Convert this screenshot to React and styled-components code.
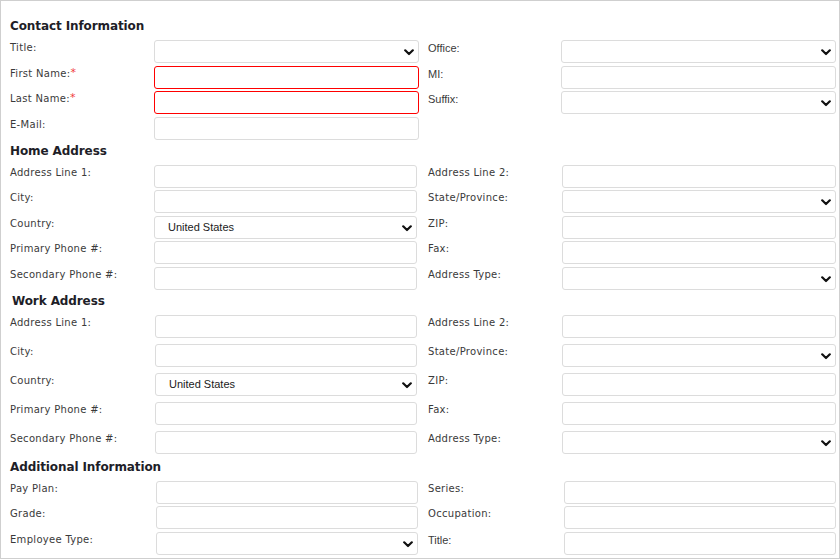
import React from "react";
import styled, { createGlobalStyle } from "styled-components";

const GlobalStyle = createGlobalStyle`
  html, body {
    margin: 0;
    padding: 0;
    background: #fff;
  }
  * {
    box-sizing: border-box;
  }
`;

const sections = [
  {
    title: "Contact Information",
    cols: [144, 265, 142],
    inset: 9,
    gap: 2.67,
    top: 14,
    rows: [
      ["Title:", { select: true }, "Office:", { select: true }, true],
      ["First Name:", { required: true, error: true }, "MI:", {}, true],
      ["Last Name:", { required: true, error: true }, "Suffix:", { select: true }, true],
      ["E-Mail:", {}],
    ],
  },
  {
    title: "Home Address",
    cols: [144, 263, 145],
    inset: 11,
    gap: 2.5,
    top: 0,
    rows: [
      ["Address Line 1:", {}, "Address Line 2:", {}],
      ["City:", {}, "State/Province:", { select: true }],
      ["Country:", { select: true, value: "United States" }, "ZIP:", {}],
      ["Primary Phone #:", {}, "Fax:", {}],
      ["Secondary Phone #:", {}, "Address Type:", { select: true }],
    ],
  },
  {
    title: "Work Address",
    cols: [145, 262, 145],
    inset: 11,
    gap: 6,
    top: 0,
    shift: 2,
    rows: [
      ["Address Line 1:", {}, "Address Line 2:", {}],
      ["City:", {}, "State/Province:", { select: true }],
      ["Country:", { select: true, value: "United States" }, "ZIP:", {}],
      ["Primary Phone #:", {}, "Fax:", {}],
      ["Secondary Phone #:", {}, "Address Type:", { select: true }],
    ],
  },
  {
    title: "Additional Information",
    cols: [146, 262, 146],
    inset: 10,
    gap: 2.5,
    top: 2,
    rows: [
      ["Pay Plan:", {}, "Series:", {}],
      ["Grade:", {}, "Occupation:", {}],
      ["Employee Type:", { select: true }, "Title:", {}, true],
    ],
  },
];

const Chevron = () => (
  <ChevronIcon width="10" height="7" viewBox="0 0 10 7">
    <polyline points="1.2,1.3 5,5 8.8,1.3" />
  </ChevronIcon>
);

const Field = ({ spec }) => {
  if (spec.select) {
    return (
      <SelectWrap>
        <Select defaultValue={spec.value || ""}>
          <option value={spec.value || ""}>{spec.value || ""}</option>
        </Select>
        <Chevron />
      </SelectWrap>
    );
  }
  return <Input type="text" $error={spec.error} />;
};

const App = () => {
  return (
    <>
      <GlobalStyle />
      <Page>
        {sections.map((sec) => (
          <Section key={sec.title}>
            <Heading $top={sec.top} $shift={sec.shift}>
              {sec.title}
            </Heading>
            <Grid $cols={sec.cols} $gap={sec.gap}>
              {sec.rows.map(([label, field, rLabel, rField, plain]) => (
                <React.Fragment key={label + rLabel}>
                  <Label>
                    {label}
                    {field.required && <Star>*</Star>}
                  </Label>
                  <Field spec={field} />
                  {rLabel ? (
                    <Label $inset={sec.inset} $plain={plain}>
                      {rLabel}
                    </Label>
                  ) : (
                    <span />
                  )}
                  {rField ? <Field spec={rField} /> : <span />}
                </React.Fragment>
              ))}
            </Grid>
          </Section>
        ))}
      </Page>
    </>
  );
};

const Page = styled.div`
  width: 840px;
  height: 559px;
  overflow: hidden;
  border: 1px solid #cfcfcf;
  padding: 0 3px 0 9px;
  font-family: "DejaVu Sans", Verdana, sans-serif;
  color: #333;
`;

const Section = styled.section`
  display: flex;
  flex-direction: column;
`;

const Heading = styled.h3`
  margin: ${(p) => p.$top}px 0 3px ${(p) => p.$shift || 0}px;
  font-size: 12px;
  line-height: 22px;
  font-weight: bold;
  letter-spacing: -0.1px;
  color: #1e1e28;
`;

const Grid = styled.div`
  display: grid;
  grid-template-columns: ${(p) => `${p.$cols[0]}px ${p.$cols[1]}px ${p.$cols[2]}px 1fr`};
  grid-auto-rows: 23px;
  row-gap: ${(p) => p.$gap}px;
`;

const Label = styled.label`
  display: block;
  padding-top: 1px;
  padding-left: ${(p) => p.$inset || 0}px;
  font-family: ${(p) =>
    p.$plain ? `"Liberation Sans", Arial, sans-serif` : `"DejaVu Sans", Verdana, sans-serif`};
  font-size: ${(p) => (p.$plain ? "11px" : "10px")};
  letter-spacing: ${(p) => (p.$plain ? "0" : "0.3px")};
  line-height: 14px;
  color: #3a3a3a;
  white-space: nowrap;
`;

const Star = styled.span`
  color: #f03c3c;
  font-size: 11px;
  vertical-align: top;
  line-height: 12px;
`;

const Input = styled.input`
  width: 100%;
  height: 23px;
  margin: 0;
  padding: 0 6px;
  border: 1px solid ${(p) => (p.$error ? "#ff0000" : "#dcdcdc")};
  border-radius: 3px;
  background: #fff;
  outline: none;
`;

const SelectWrap = styled.div`
  position: relative;
  height: 23px;
`;

const Select = styled.select`
  appearance: none;
  -webkit-appearance: none;
  width: 100%;
  height: 23px;
  margin: 0;
  padding: 0 20px 0 13px;
  border: 1px solid #dcdcdc;
  border-radius: 3px;
  background: #fff;
  font-family: "Liberation Sans", Arial, sans-serif;
  font-size: 11px;
  color: #1a1a1a;
  outline: none;
`;

const ChevronIcon = styled.svg`
  position: absolute;
  right: 5px;
  top: 9px;
  pointer-events: none;
  fill: none;
  stroke: #111;
  stroke-width: 2.2;
  stroke-linecap: round;
  stroke-linejoin: round;
`;

export default App;
